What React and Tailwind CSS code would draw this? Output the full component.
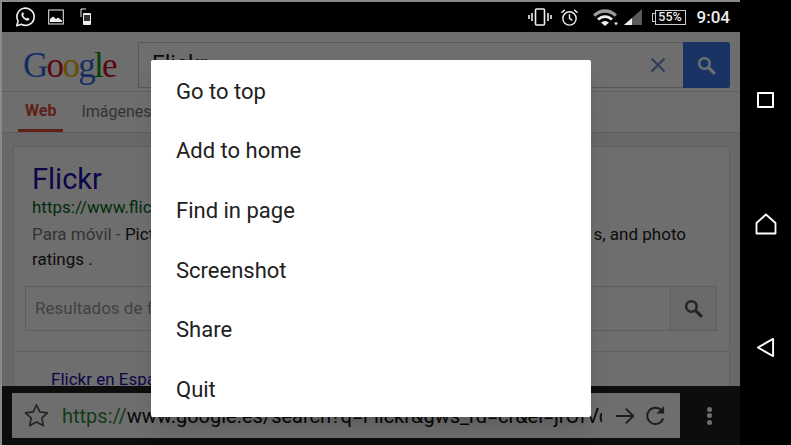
import React from 'react';

const roboto = { fontFamily: 'Roboto, sans-serif' };

const menuItems = ['Go to top', 'Add to home', 'Find in page', 'Screenshot', 'Share', 'Quit'];

const SearchIcon = ({ className }) => (
  <svg viewBox="0 0 20 20" className={className} fill="none" stroke="currentColor">
    <circle cx="8" cy="8" r="5" strokeWidth="2.400" />
    <path d="M12 12l6 6" strokeWidth="3" />
  </svg>
);

const StatusBar = () => (
  <div className="h-[30px] mt-[2px] ml-[2px] bg-black flex items-center text-[#eeeeee] shrink-0 relative">
    {/* LEFT */}
    <svg viewBox="0 0 24 24" className="w-[22px] h-[22px] ml-[12px]" fill="none" stroke="currentColor">
      <path d="M3 21.500l1.500-5A9.400 9.400 0 1 1 8 19.900z" strokeWidth="1.800" strokeLinejoin="round" />
      <path d="M9 7.500c-1.600 1-1.200 3.200.6 5.400 1.800 2.200 4 3.500 5.600 3 1.200-.4 1.800-1.500 1.600-2l-2.300-1.300-1 1c-1.200-.3-3-2.200-3.500-3.600l.9-1-1-2.400c-.2-.2-.5-.2-.9.9z" fill="currentColor" stroke="none" />
    </svg>
    <svg viewBox="0 0 16 16" className="w-[16px] h-[16px] ml-[12px]" fill="none" stroke="currentColor">
      <rect x="0.700" y="1" width="14.600" height="14" strokeWidth="1" />
      <path d="M2 13v-3l3-2.500 3 2.500 2-1.500 4 3v1.500z" fill="currentColor" stroke="none" />
    </svg>
    <svg viewBox="0 0 12 18" className="w-[12px] h-[18px] ml-[16px]" fill="none" stroke="currentColor">
      <path d="M1 9V1h5" strokeWidth="1" />
      <rect x="3" y="5" width="8" height="12" rx="1" fill="currentColor" stroke="none" />
      <rect x="4" y="7" width="6" height="6" fill="#333" stroke="none" />
    </svg>

    {/* RIGHT */}
    <div className="ml-auto flex items-center pr-[10px]">
      <svg viewBox="0 0 24 18" className="w-[24px] h-[18px]" fill="none" stroke="currentColor">
        <rect x="7.500" y="1" width="9" height="16" rx="1" strokeWidth="1.600" />
        <path d="M4 5v8M1 7v4M20 5v8M23 7v4" strokeWidth="1.600" />
      </svg>
      <svg viewBox="0 0 20 20" className="w-[19px] h-[19px] ml-[8px]" fill="none" stroke="currentColor">
        <circle cx="10" cy="11" r="7" strokeWidth="1.500" />
        <path d="M10 6.500V11l3 2M1.500 5L5 2M18.500 5L15 2" strokeWidth="1.500" />
      </svg>
      <svg viewBox="0 0 26 18" className="w-[26px] h-[19px] ml-[14px]" fill="currentColor">
        <path d="M0 6C7-1 17-1 24 6l-2.200 2.200C15.800 2.800 8.200 2.800 2.200 8.200z" fill="#9a9a9a" />
        <path d="M4 10c5-4.500 11-4.500 16 0l-2 2c-4-3.300-8-3.300-12 0z" />
        <path d="M8 14c2.500-2 5.500-2 8 0l-4 3.500z" />
        <path d="M21 14h4l-2 3z" />
      </svg>
      <svg viewBox="0 0 20 18" className="w-[20px] h-[18px] ml-[5px]">
        <path d="M0 17L18 1v16z" fill="#5a5a5a" />
        <path d="M0 17l8-7v7z" fill="#eeeeee" />
      </svg>
      <div className="ml-[8px] flex items-center">
        <div className="w-[3px] h-[9px] border border-r-0 border-[#cccccc]" />
        <div className="w-[31px] h-[15px] border border-[#cccccc] flex items-center justify-center text-[12.500px] font-medium leading-none" style={roboto}>
          55%
        </div>
      </div>
      <span className="ml-[11px] text-[17px] font-medium leading-none" style={roboto}>9:04</span>
    </div>
  </div>
);

const GoogleLogo = () => (
  <div className="text-[35px] leading-none tracking-[-1.700px]" style={{ fontFamily: '"Liberation Serif", serif' }}>
    <span className="text-[#3369e8]">G</span>
    <span className="text-[#d50f25]">o</span>
    <span className="text-[#eeb211]">o</span>
    <span className="text-[#3369e8]">g</span>
    <span className="text-[#009925]">l</span>
    <span className="text-[#d50f25]">e</span>
  </div>
);

const Page = () => (
  <div className="h-[354px] bg-[#f1f1f1] overflow-hidden flex flex-col" style={roboto}>
    {/* Search header */}
    <div className="bg-white h-[60px] shrink-0 flex items-start pt-[10px] pl-[21px] pr-[10px] border-b border-[#dddddd]">
      <div className="w-[115px] pt-[6px]">
        <GoogleLogo />
      </div>
      <div className="flex-1 h-[46px] border border-[#cccccc] border-r-0 flex items-center pl-[13px] text-[23px] text-[#222222]">
        Flickr
        <svg viewBox="0 0 16 16" className="w-[16px] h-[16px] ml-auto mr-[17px] text-[#6f8fd0]" fill="none" stroke="currentColor">
          <path d="M1.500 1.500l13 13M14.500 1.500l-13 13" strokeWidth="2.400" />
        </svg>
      </div>
      <div className="w-[47px] h-[46px] bg-[#3b78e7] rounded-r-[2px] flex items-center justify-center text-white">
        <SearchIcon className="w-[21px] h-[21px]" />
      </div>
    </div>

    {/* Tabs */}
    <div className="bg-white h-[41px] shrink-0 flex px-[16px] border-b border-[#dddddd] text-[16px]">
      <div className="h-full px-[7px] flex items-center border-b-[3px] border-[#dd4b39] text-[#dd4b39] font-bold">Web</div>
      <div className="h-full pl-[18px] flex items-center text-[#777777]">Imágenes</div>
    </div>

    {/* Result card */}
    <div className="mt-[13px] ml-[11px] mr-[10px] bg-white border border-[#e2e2e2] flex-1 flex flex-col">
      <div className="pl-[18px] pr-[12px] pt-[13px] pb-[20px]">
        <div className="text-[29px] leading-[38px] text-[#1a0dab]">Flickr</div>
        <div className="text-[17px] leading-[19px] text-[#006621] whitespace-nowrap">https://www.flickr.com/</div>
        <div className="mt-[5px] text-[17px] leading-[25px] text-[#222222]">
          <div className="flex justify-between w-[654px]">
            <span><span className="text-[#777777]">Para móvil - </span>Pictures</span>
            <span>s, and photo</span>
          </div>
          <div>ratings .</div>
        </div>
        <div className="mt-[14px] ml-[-7px] h-[45px] border border-[#d9d9d9] flex items-center">
          <span className="flex-1 pl-[9px] text-[17px] text-[#999999]">Resultados de flickr</span>
          <div className="w-[46px] h-full bg-[#f5f5f5] border-l border-[#d9d9d9] flex items-center justify-center text-[#555555]">
            <SearchIcon className="w-[21px] h-[21px]" />
          </div>
        </div>
      </div>
      <div className="border-t border-[#e2e2e2] pl-[37px] pt-[15px] text-[17px] text-[#1a0dab]">Flickr en Español</div>
    </div>
  </div>
);

const BottomBar = () => (
  <div className="flex-1 bg-[#1e1e1e] flex items-center pl-[10px]" style={roboto}>
    <div className="w-[668px] h-[45px] bg-white rounded-[1px] flex items-center overflow-hidden">
      <svg viewBox="0 0 24 24" className="w-[27px] h-[27px] ml-[11px] shrink-0 text-[#555555]" fill="none" stroke="currentColor">
        <path d="M12 2.500l2.900 6.300 6.900.8-5.100 4.700 1.400 6.800-6.100-3.400-6.100 3.400 1.400-6.800-5.100-4.700 6.900-.8z" strokeWidth="1.500" strokeLinejoin="round" />
      </svg>
      <div className="w-[540px] ml-[12px] overflow-hidden whitespace-nowrap text-[20px] text-[#111111] shrink-0">
        <span className="text-[#2e8b3a]">https://</span>www.google.es/search?q=Flickr&amp;gws_rd=cr&amp;ei=jrOfVcOe
      </div>
      <svg viewBox="0 0 24 24" className="w-[22px] h-[22px] ml-[12px] shrink-0 text-[#444444]" fill="none" stroke="currentColor">
        <path d="M2 12h19M13 4l8 8-8 8" strokeWidth="2" />
      </svg>
      <svg viewBox="0 0 24 24" className="w-[23px] h-[23px] ml-[8px] shrink-0 text-[#444444]" fill="none" stroke="currentColor">
        <path d="M20 15a8.500 8.500 0 1 1-1.500-8" strokeWidth="2" />
        <path d="M21 2v8h-8z" fill="currentColor" stroke="none" />
      </svg>
    </div>
    <div className="ml-[27px] flex flex-col gap-[1.500px]">
      <div className="w-[5px] h-[5px] rounded-full bg-white" />
      <div className="w-[5px] h-[5px] rounded-full bg-white" />
      <div className="w-[5px] h-[5px] rounded-full bg-white" />
    </div>
  </div>
);

const NavBar = () => (
  <div className="w-[51px] bg-black flex flex-col items-center text-white pt-[92px]">
    <div className="w-[17px] h-[16px] border-2 border-white rounded-[1px]" />
    <svg viewBox="0 0 22 22" className="w-[22px] h-[22px] mt-[105px]" fill="none" stroke="currentColor">
      <path d="M1.500 10L11 1.500 20.500 10v10.500h-19z" strokeWidth="1.800" strokeLinejoin="round" />
    </svg>
    <svg viewBox="0 0 20 22" className="w-[19px] h-[21px] mt-[102px]" fill="none" stroke="currentColor">
      <path d="M2 11L18 2v18z" strokeWidth="2" strokeLinejoin="round" />
    </svg>
  </div>
);

const App = () => {
  return (
    <div className="w-[791px] h-[445px] flex overflow-hidden bg-[#8a8a8a]">
      <div className="w-[740px] flex flex-col relative">
        <StatusBar />
        <div className="flex-1 flex flex-col relative ml-[2px]">
          <Page />
          <BottomBar />
          {/* Dim behind the menu */}
          <div className="absolute inset-0 bg-black/[0.57]" />
        </div>
        {/* Menu */}
        <div className="absolute left-[151px] top-[60px] w-[440px] h-[357px] bg-white rounded-[2px] shadow-xl flex flex-col pt-[1.500px] pl-[25px] text-[22px] text-[#212121]" style={roboto}>
          {menuItems.map((item) => (
            <div key={item} className="h-[59.600px] shrink-0 flex items-center">{item}</div>
          ))}
        </div>
      </div>
      <NavBar />
    </div>
  );
};

export default App;
